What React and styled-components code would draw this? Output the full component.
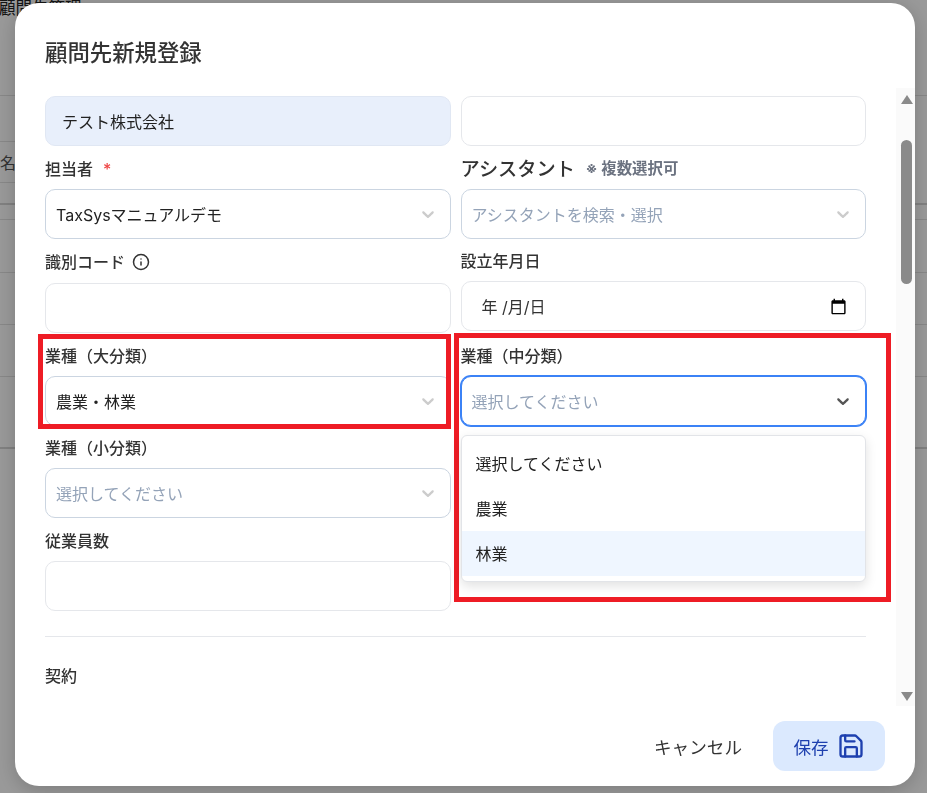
import React from 'react';
import styled, { createGlobalStyle } from 'styled-components';
import { Info, Save } from 'lucide-react';

const GlobalStyle = createGlobalStyle`
  * { box-sizing: border-box; }
  html, body { margin: 0; height: 100%; overflow: hidden; }
  body {
    background: #fff;
    color: #333;
    font-family: Inter, "Noto Sans CJK JP", "Noto Sans", sans-serif;
  }
`;

const bgRows = [
  { h: 96 },
  { h: 46, short: true },
  { h: 41, short: true },
  { h: 22, thick: true },
  { h: 15 },
  { h: 53 },
  { h: 52 },
  { h: 52 },
  { h: 72, thick: true },
];

const Chevron = () => (
  <svg width="20" height="20" viewBox="0 0 20 20" fill="currentColor" aria-hidden="true">
    <path d="M4.516 7.548c0.436-0.446 1.043-0.481 1.576 0l3.908 3.747 3.908-3.747c0.533-0.481 1.141-0.446 1.574 0 0.436 0.445 0.408 1.197 0 1.615-0.406 0.418-4.695 4.502-4.695 4.502-0.217 0.223-0.502 0.335-0.787 0.335s-0.57-0.112-0.789-0.335c0 0-4.287-4.084-4.695-4.502s-0.436-1.17 0-1.615z" />
  </svg>
);

const CalendarIcon = () => (
  <svg width="17" height="17" viewBox="0 0 24 24" fill="#000" aria-hidden="true">
    <path d="M20 3h-1V1h-2v2H7V1H5v2H4c-1.1 0-2 .9-2 2v16c0 1.1.9 2 2 2h16c1.1 0 2-.9 2-2V5c0-1.1-.9-2-2-2zm0 18H4V8h16v13z" />
  </svg>
);

const SelectBox = ({ value, placeholder, focused }) => (
  <Select $focused={focused}>
    {value ? <SelectValue>{value}</SelectValue> : <Placeholder>{placeholder}</Placeholder>}
    <ChevronWrap $focused={focused}>
      <Chevron />
    </ChevronWrap>
  </Select>
);

const App = () => {
  return (
    <>
      <GlobalStyle />
      <Page>
        <PageTitle>顧問先管理</PageTitle>
        <NameHead>名</NameHead>
        {bgRows.map((row, i) => (
          <BgRow key={i} $h={row.h} $short={row.short} $thick={row.thick} />
        ))}
      </Page>
      <Overlay>
        <Modal>
          <Title>顧問先新規登録</Title>
          <ScrollArea>
            <Body>
              <FormGrid>
                <TextInput $filled>テスト株式会社</TextInput>
                <TextInput />

                <Field>
                  <Label>
                    担当者<Required>*</Required>
                  </Label>
                  <SelectBox value="TaxSysマニュアルデモ" />
                </Field>
                <Field>
                  <Label>
                    <BigLabel>アシスタント</BigLabel>
                    <Note>※ 複数選択可</Note>
                  </Label>
                  <SelectBox placeholder="アシスタントを検索・選択" />
                </Field>

                <Field>
                  <Label $withIcon>
                    識別コード
                    <InfoIcon>
                      <Info size={18} strokeWidth={2} />
                    </InfoIcon>
                  </Label>
                  <TextInput />
                </Field>
                <Field>
                  <Label>設立年月日</Label>
                  <DateInput>
                    <span>年 /月/日</span>
                    <CalendarIcon />
                  </DateInput>
                </Field>

                <Field>
                  <Label>業種（大分類）</Label>
                  <SelectBox value="農業・林業" />
                </Field>
                <Field>
                  <Label>業種（中分類）</Label>
                  <SelectBox placeholder="選択してください" focused />
                  <Menu>
                    <MenuItem>選択してください</MenuItem>
                    <MenuItem>農業</MenuItem>
                    <MenuItem $active>林業</MenuItem>
                  </Menu>
                </Field>

                <Field>
                  <Label>業種（小分類）</Label>
                  <SelectBox placeholder="選択してください" />
                </Field>
                <div />

                <Field>
                  <Label>従業員数</Label>
                  <TextInput />
                </Field>
              </FormGrid>
              <Divider />
              <SectionTitle>契約</SectionTitle>
            </Body>
            <Scrollbar>
              <ArrowUp />
              <ThumbTrack>
                <Thumb />
              </ThumbTrack>
              <ArrowDown />
            </Scrollbar>
          </ScrollArea>
          <Footer>
            <CancelButton>キャンセル</CancelButton>
            <SaveButton>
              保存
              <Save size={28} strokeWidth={2} />
            </SaveButton>
          </Footer>
          <RedFrame $left={23} $top={331} $width={413} $height={95} />
          <RedFrame $left={439} $top={330} $width={437} $height={269} />
        </Modal>
      </Overlay>
    </>
  );
};

const Page = styled.div`
  position: relative;
  height: 793px;
  overflow: hidden;
`;

const PageTitle = styled.div`
  position: absolute;
  top: -4px;
  left: -1px;
  font-size: 16.5px;
  line-height: 24px;
  color: #222;
`;

const NameHead = styled.div`
  position: absolute;
  top: 151px;
  left: 0;
  font-size: 16px;
  line-height: 24px;
  color: #555;
`;

const BgRow = styled.div`
  height: ${(p) => p.$h}px;
  width: ${(p) => (p.$short ? '400px' : '100%')};
  border-bottom: ${(p) => (p.$thick ? '2px solid #d6d6d6' : '1px solid #e2e2e2')};
`;

const Overlay = styled.div`
  position: fixed;
  inset: 0;
  padding: 3px 12px 7px 15px;
  background: rgba(0, 0, 0, 0.4);
`;

const Modal = styled.div`
  position: relative;
  display: flex;
  flex-direction: column;
  width: 900px;
  height: 783px;
  background: #fff;
  border-radius: 24px;
  box-shadow: 0 4px 20px rgba(0, 0, 0, 0.2);
  overflow: hidden;
`;

const Title = styled.h2`
  flex: none;
  height: 85px;
  margin: 0;
  padding: 34px 30px 0;
  font-size: 22.4px;
  line-height: 32px;
  font-weight: 500;
  color: #333;
`;

const ScrollArea = styled.div`
  flex: 1;
  min-height: 0;
  display: flex;
`;

const Body = styled.div`
  flex: 1;
  min-width: 0;
  padding: 8px 30px 0;
  overflow: hidden;
`;

const FormGrid = styled.div`
  display: grid;
  grid-template-columns: 1fr 1fr;
  column-gap: 10px;
  row-gap: 10.6px;
  align-items: start;
`;

const Field = styled.div`
  position: relative;
  min-width: 0;
`;

const Label = styled.div`
  display: flex;
  align-items: center;
  height: ${(p) => (p.$withIcon ? '26px' : '24px')};
  margin-bottom: 8px;
  font-size: 16px;
  line-height: 24px;
  font-weight: 500;
  color: #333;
  white-space: nowrap;
`;

const BigLabel = styled.span`
  font-size: 19.2px;
`;

const Note = styled.span`
  margin-left: 11px;
  font-size: 15.4px;
  font-weight: 600;
  color: #6b7280;
`;

const Required = styled.span`
  margin-left: 10px;
  color: #ef4444;
`;

const InfoIcon = styled.span`
  display: inline-flex;
  margin-left: 7px;
  color: #333;
`;

const TextInput = styled.div`
  display: flex;
  align-items: center;
  height: 50px;
  padding: 0 16px;
  font-size: 16px;
  color: #222;
  background: ${(p) => (p.$filled ? '#e8effb' : '#fff')};
  border: 1px solid ${(p) => (p.$filled ? '#e0e7f3' : '#e5e7eb')};
  border-radius: 10px;
`;

const DateInput = styled(TextInput)`
  justify-content: space-between;
  padding: 0 18px 0 20px;
  color: #333;
`;

const Select = styled.div`
  display: flex;
  align-items: center;
  justify-content: space-between;
  height: 50px;
  padding: 0 12px 0 10px;
  font-size: 16px;
  background: #fff;
  border: 1px solid ${(p) => (p.$focused ? '#3b82f6' : '#cbd5e1')};
  border-radius: 10px;
  box-shadow: ${(p) => (p.$focused ? '0 0 0 1px #3b82f6' : 'none')};
`;

const SelectValue = styled.span`
  color: #222;
`;

const Placeholder = styled.span`
  color: #94a3b8;
`;

const ChevronWrap = styled.span`
  display: inline-flex;
  color: ${(p) => (p.$focused ? '#555' : '#ccc')};
`;

const Menu = styled.div`
  position: absolute;
  top: calc(100% + 9px);
  left: 0;
  right: 0;
  z-index: 2;
  padding: 5px 0 5px;
  background: #fff;
  border: 1px solid #e2e4e8;
  border-radius: 6px;
  box-shadow: 0 4px 12px rgba(0, 0, 0, 0.12);
`;

const MenuItem = styled.div`
  display: flex;
  align-items: center;
  height: 45px;
  padding: 0 14px;
  font-size: 16px;
  color: #222;
  background: ${(p) => (p.$active ? '#eff6ff' : 'transparent')};
`;

const Divider = styled.hr`
  height: 1px;
  margin: 25px 0 0;
  border: 0;
  background: #e5e7eb;
`;

const SectionTitle = styled.div`
  margin-top: 27px;
  font-size: 16px;
  line-height: 24px;
  font-weight: 500;
  color: #333;
`;

const Scrollbar = styled.div`
  flex: none;
  display: flex;
  flex-direction: column;
  align-items: center;
  width: 19px;
  padding: 7px 0 5px 2px;
  background: #fafafa;
`;

const ArrowUp = styled.div`
  flex: none;
  width: 0;
  height: 0;
  border-left: 6.5px solid transparent;
  border-right: 6.5px solid transparent;
  border-bottom: 9px solid #8a8a8a;
`;

const ArrowDown = styled.div`
  flex: none;
  width: 0;
  height: 0;
  border-left: 6.5px solid transparent;
  border-right: 6.5px solid transparent;
  border-top: 9px solid #8a8a8a;
`;

const ThumbTrack = styled.div`
  flex: 1;
  padding-top: 36px;
`;

const Thumb = styled.div`
  width: 11px;
  height: 144px;
  border-radius: 6px;
  background: #8a8a8a;
`;

const Footer = styled.div`
  flex: none;
  display: flex;
  justify-content: flex-end;
  align-items: center;
  gap: 31px;
  height: 80px;
  padding: 0 30px 0 0;
`;

const CancelButton = styled.button`
  padding: 0;
  border: 0;
  background: none;
  font: inherit;
  font-size: 17.6px;
  color: #333;
`;

const SaveButton = styled.button`
  display: flex;
  align-items: center;
  justify-content: center;
  gap: 8px;
  width: 112px;
  height: 50px;
  padding: 0;
  border: 0;
  border-radius: 12px;
  background: #dbe9fe;
  font: inherit;
  font-size: 17.6px;
  color: #1e40af;
`;

const RedFrame = styled.div`
  position: absolute;
  left: ${(p) => p.$left}px;
  top: ${(p) => p.$top}px;
  width: ${(p) => p.$width}px;
  height: ${(p) => p.$height}px;
  border: 5px solid #ee1c25;
  pointer-events: none;
`;

export default App;
